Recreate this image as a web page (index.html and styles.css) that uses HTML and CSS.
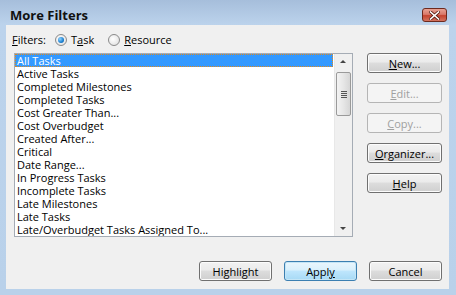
FILE: index.html
```html
<!DOCTYPE html>
<html lang="en">
<head>
    <meta charset="UTF-8">
    <title>More Filters</title>
    <link rel="stylesheet" href="styles.css">
</head>
<body>
    <div class="window">
        <div class="titlebar">
            <span class="title">More Filters</span>
            <button class="close-btn" aria-label="Close">
                <svg width="11" height="9" viewBox="0 0 11 9">
                    <path d="M1.5 1 L9.5 8 M9.5 1 L1.5 8" stroke="#5a1f14" stroke-width="3.2" stroke-linecap="square"/>
                    <path d="M1.5 1 L9.5 8 M9.5 1 L1.5 8" stroke="#fff" stroke-width="1.6" stroke-linecap="square"/>
                </svg>
            </button>
        </div>
        <div class="client">
            <div class="filters-row">
                <span class="label"><u>F</u>ilters:</span>
                <label class="radio"><span class="dot checked"></span>T<u>a</u>sk</label>
                <label class="radio"><span class="dot"></span><u>R</u>esource</label>
            </div>
            <div class="main-row">
                <div class="listbox">
                    <ul class="items">
                        <li class="selected">All Tasks</li>
                        <li>Active Tasks</li>
                        <li>Completed Milestones</li>
                        <li>Completed Tasks</li>
                        <li>Cost Greater Than...</li>
                        <li>Cost Overbudget</li>
                        <li>Created After...</li>
                        <li>Critical</li>
                        <li>Date Range...</li>
                        <li>In Progress Tasks</li>
                        <li>Incomplete Tasks</li>
                        <li>Late Milestones</li>
                        <li>Late Tasks</li>
                        <li>Late/Overbudget Tasks Assigned To...</li>
                    </ul>
                    <div class="scrollbar">
                        <div class="arrow up"></div>
                        <div class="track">
                            <div class="thumb"><span class="grip"></span></div>
                        </div>
                        <div class="arrow down"></div>
                    </div>
                </div>
                <div class="side-buttons">
                    <button class="btn"><u>N</u>ew...</button>
                    <button class="btn disabled"><u>E</u>dit...</button>
                    <button class="btn disabled"><u>C</u>opy...</button>
                    <button class="btn"><u>O</u>rganizer...</button>
                    <button class="btn"><u>H</u>elp</button>
                </div>
            </div>
            <div class="bottom-row">
                <button class="btn">Hi<u>g</u>hlight</button>
                <button class="btn default">Appl<u>y</u></button>
                <button class="btn">Cancel</button>
            </div>
        </div>
    </div>
</body>
</html>
```

FILE: styles.css
```css
/* Ventana general */
body {
    margin: 0;
    font-family: 'Open Sans', 'DejaVu Sans', sans-serif;
    font-size: 11px;
    color: #000;
}

.window {
    width: 456px;
    height: 295px;
    box-sizing: border-box;
    background: linear-gradient(to bottom, #a6bedb 0px, #bcd3ec 25px, #b9d1ea 100%);
    padding: 0 7px 6px 6px;
    display: flex;
    flex-direction: column;
}

/* Barra de titulo */
.titlebar {
    height: 25px;
    display: flex;
    align-items: flex-start;
    justify-content: space-between;
    padding-left: 4px;
    padding-right: 2px;
    box-sizing: border-box;
}

.title {
    font-weight: bold;
    font-size: 13px;
    color: #111;
    margin-top: 6px;
}

.close-btn {
    width: 25px;
    height: 14px;
    margin-top: 8px;
    padding: 0;
    border: 1px solid #6d2a1e;
    border-radius: 3px;
    background: linear-gradient(to bottom, #e8a293 0%, #d9796a 45%, #c5442f 55%, #d3735f 100%);
    display: flex;
    align-items: center;
    justify-content: center;
}

/* Area de cliente */
.client {
    flex: 1;
    background-color: #f0f0f0;
    display: flex;
    flex-direction: column;
    padding: 0 7px 8px 8px;
}

.filters-row {
    height: 28px;
    display: flex;
    align-items: center;
    padding-top: 1px;
    box-sizing: border-box;
}

.label {
    margin-left: -2px;
    margin-right: 9px;
}

.radio {
    display: flex;
    align-items: center;
    margin-right: 14px;
}

.dot {
    width: 12px;
    height: 12px;
    border: 1px solid #8a8a8a;
    border-radius: 50%;
    background: radial-gradient(circle at 40% 40%, #fff 0%, #e6e6e6 70%, #cfcfcf 100%);
    margin-right: 4px;
    box-sizing: border-box;
    position: relative;
}

.dot.checked::after {
    content: "";
    position: absolute;
    left: 2px;
    top: 2px;
    width: 6px;
    height: 6px;
    border-radius: 50%;
    background: radial-gradient(circle at 35% 35%, #8fd3ff 0%, #1a7fd0 60%, #0a4f95 100%);
}

/* Lista de filtros */
.main-row {
    display: flex;
    align-items: flex-start;
}

.listbox {
    width: 339px;
    height: 184px;
    box-sizing: border-box;
    border: 1px solid #a5acb5;
    background: #fff;
    display: flex;
}

.items {
    list-style: none;
    margin: 0;
    padding: 0 1px 0 0;
    flex: 1;
    overflow: hidden;
}

.items li {
    height: 13px;
    line-height: 13px;
    padding-left: 2px;
    white-space: nowrap;
    box-sizing: border-box;
}

.items li.selected {
    background: #3399ff;
    color: #fff;
    outline: 1px dotted #e08a1e;
    outline-offset: -1px;
}

.scrollbar {
    width: 17px;
    display: flex;
    flex-direction: column;
    background: #f0f0f0;
    border-left: 1px solid #e8e8e8;
}

.arrow {
    height: 17px;
    position: relative;
}

.arrow::after {
    content: "";
    position: absolute;
    left: 5px;
    border-left: 3px solid transparent;
    border-right: 3px solid transparent;
}

.arrow.up::after {
    top: 6px;
    border-bottom: 3px solid #444;
}

.arrow.down::after {
    top: 8px;
    border-top: 3px solid #444;
}

.track {
    flex: 1;
    padding-top: 1px;
}

.thumb {
    height: 42px;
    margin: 0 1px;
    border: 1px solid #9a9a9a;
    border-radius: 2px;
    background: linear-gradient(to right, #f3f3f3 0%, #e6e6e6 50%, #d6d6d6 100%);
    display: flex;
    align-items: center;
    justify-content: center;
}

.grip {
    width: 6px;
    height: 7px;
    background: repeating-linear-gradient(to bottom, #555 0px, #555 1px, transparent 1px, transparent 2px);
}

/* Botones */
.side-buttons {
    display: flex;
    flex-direction: column;
    gap: 10px;
    margin-left: 14px;
}

.btn {
    width: 75px;
    height: 20px;
    padding: 0;
    font-family: inherit;
    font-size: 11px;
    color: #000;
    border: 1px solid #707070;
    border-radius: 3px;
    background: linear-gradient(to bottom, #f2f2f2 0%, #ebebeb 45%, #dddddd 50%, #cfcfcf 100%);
    box-shadow: inset 0 0 0 1px #fcfcfc;
}

.btn.disabled {
    color: #a0a0a0;
    border-color: #b5b5b5;
    background: #f4f4f4;
    box-shadow: none;
}

.btn.default {
    border-color: #3c7fb1;
    background: linear-gradient(to bottom, #eaf6fd 0%, #d9f0fc 45%, #bee6fd 50%, #a7d9f5 100%);
    box-shadow: inset 0 0 0 1px #c4e5f6;
}

.bottom-row {
    margin-top: auto;
    display: flex;
    justify-content: flex-end;
    gap: 12px;
}

.bottom-row .btn {
    width: 73px;
}
```
